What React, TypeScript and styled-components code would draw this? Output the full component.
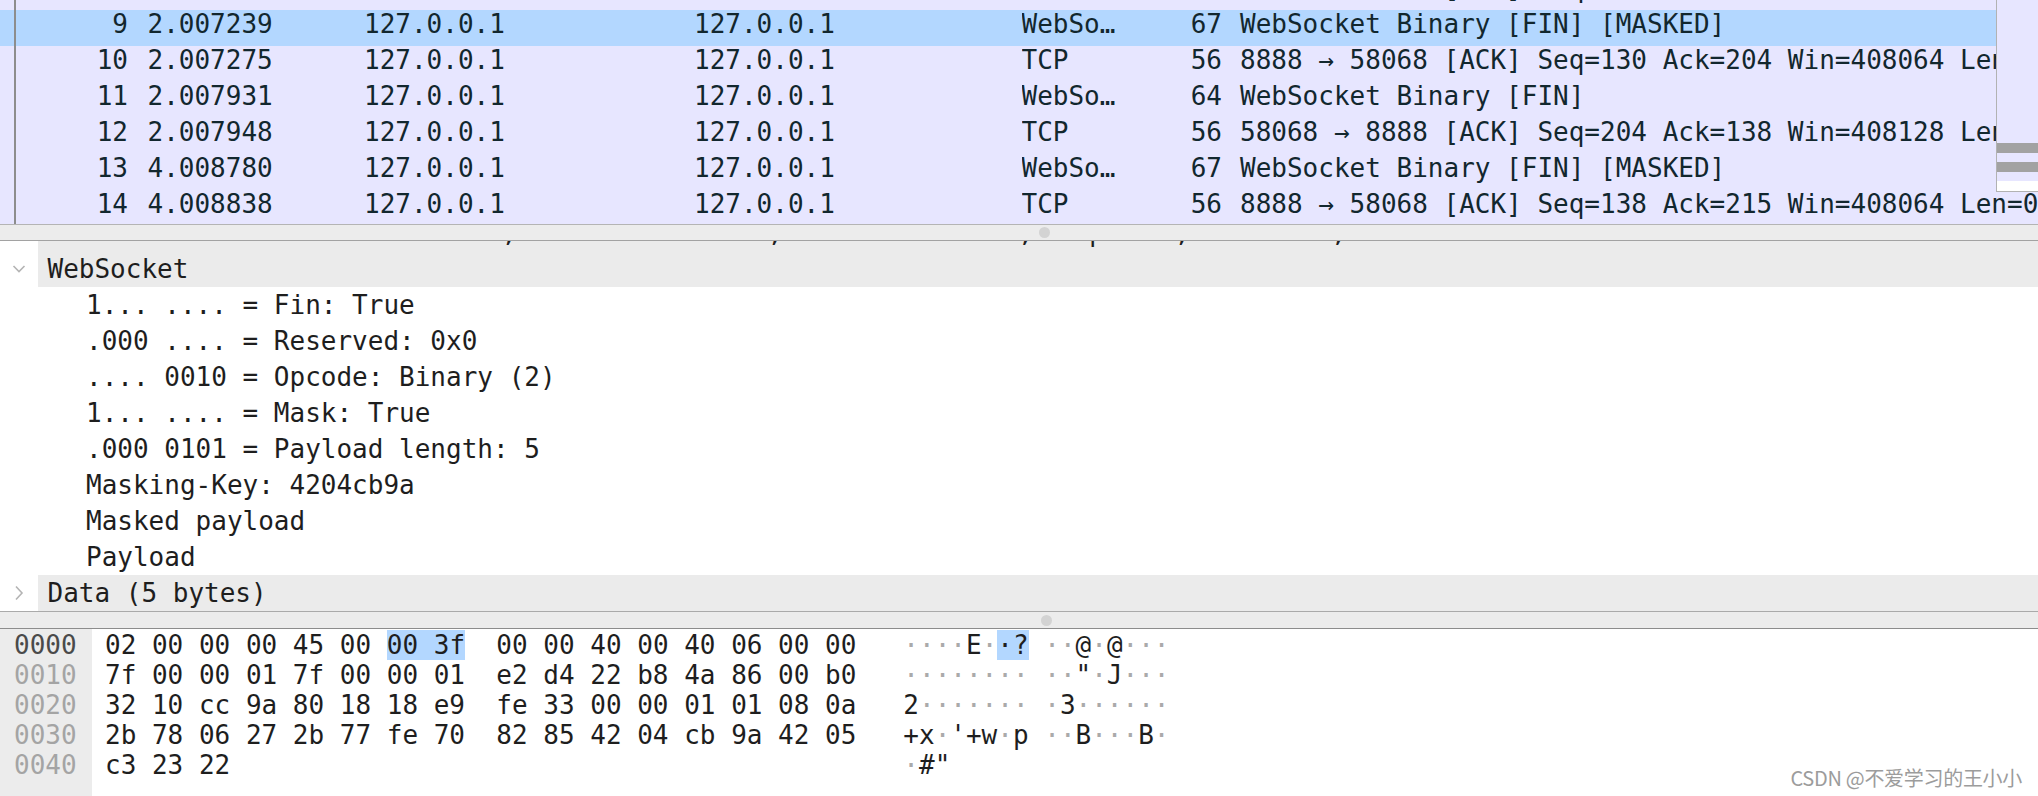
import React from "react";
import styled, { createGlobalStyle } from "styled-components";

const GlobalStyle = createGlobalStyle`
  *, *::before, *::after { box-sizing: border-box; }
  html, body { margin: 0; padding: 0; background: #ffffff; }
  body { width: 2038px; height: 796px; overflow: hidden; }
  #root { width: 2038px; height: 796px; }
`;

const MONO = `"DejaVu Sans Mono", "Liberation Mono", monospace`;

const Window = styled.div`
  position: relative;
  width: 2038px;
  height: 796px;
  display: flex;
  flex-direction: column;
  background: #ffffff;
  font-family: ${MONO};
  font-size: 26px;
  overflow: hidden;
`;

/* ---------- packet list ---------- */

const PacketList = styled.div`
  position: relative;
  flex: none;
  height: 225px;
  overflow: hidden;
  background: #e7e6ff;
  border-bottom: 1px solid #b4b4b4;
`;

const PacketRows = styled.div`
  margin-top: -26px;
`;

const PacketRow = styled.div<{ $selected?: boolean }>`
  display: grid;
  grid-template-columns: 16px 131.5px 216.5px 330px 327.5px 138.5px 62px minmax(0, 1fr);
  height: 36px;
  line-height: 29px;
  white-space: pre;
  color: #12272e;
  background: ${(p) => (p.$selected ? "#b3d7ff" : "transparent")};
`;

const Gutter = styled.span`
  border-right: 2px solid #8d8d8d;
`;

const Cell = styled.span<{ $right?: boolean; $padL?: number; $padR?: number }>`
  overflow: hidden;
  text-align: ${(p) => (p.$right ? "right" : "left")};
  padding-left: ${(p) => p.$padL ?? 0}px;
  padding-right: ${(p) => p.$padR ?? 0}px;
`;

const OverviewBar = styled.div`
  position: absolute;
  top: 0;
  right: 0;
  width: 42px;
  height: 192px;
  background: #e7e6ff;
  border-left: 1px solid #b2b2b2;
  border-bottom: 1px solid #b2b2b2;
  display: flex;
  flex-direction: column;
  justify-content: flex-end;
  gap: 9px;
`;

const OverviewMark = styled.div<{ $white?: boolean }>`
  height: 10px;
  background: ${(p) => (p.$white ? "#ffffff" : "#a2a2a2")};
`;

/* ---------- splitters ---------- */

const Splitter = styled.div<{ $h: number; $line: string; $handleX: number }>`
  flex: none;
  height: ${(p) => p.$h}px;
  background: #ececec;
  border-bottom: 1px solid ${(p) => p.$line};
  display: flex;
  align-items: center;
  padding-left: ${(p) => p.$handleX}px;
`;

const Handle = styled.div`
  width: 11px;
  height: 11px;
  border-radius: 50%;
  background: #d3d3d3;
`;

/* ---------- details tree ---------- */

const TreePanel = styled.div`
  flex: none;
  height: 371px;
  overflow: hidden;
  background: #ffffff;
  border-bottom: 1px solid #aaaaaa;
`;

const TreeRows = styled.div`
  margin-top: -26px;
`;

const TreeRow = styled.div<{ $clipped?: boolean }>`
  display: grid;
  grid-template-columns: 38px minmax(0, 1fr);
  height: 36px;
  line-height: ${(p) => (p.$clipped ? 35 : 36)}px;
  white-space: pre;
  color: #1e1e1e;
`;

const Twisty = styled.span`
  display: flex;
  align-items: center;
  justify-content: center;
  background: #ffffff;
`;

const TreeLabel = styled.span<{ $top?: boolean }>`
  overflow: hidden;
  background: ${(p) => (p.$top ? "#ebebeb" : "#ffffff")};
  padding-left: ${(p) => (p.$top ? 9.5 : 48)}px;
`;

/* ---------- hex dump ---------- */

const HexPanel = styled.div`
  flex: 1;
  display: grid;
  grid-template-columns: 92px minmax(0, 1fr);
  background: #ffffff;
`;

const OffsetCol = styled.div`
  background: #ececec;
  padding: 1px 0 0 14px;
`;

const Offset = styled.div<{ $active?: boolean }>`
  height: 30px;
  line-height: 30px;
  color: ${(p) => (p.$active ? "#4a4a4a" : "#a4a4a4")};
`;

const BytesCol = styled.div`
  padding: 1px 0 0 13px;
`;

const HexLine = styled.div`
  height: 30px;
  line-height: 30px;
  white-space: pre;
  color: #1e1e1e;
`;

const Mark = styled.span`
  display: inline-block;
  height: 30px;
  background: #b3d7ff;
`;

const Dot = styled.span`
  color: #aaaaaa;
`;

const Watermark = styled.div`
  position: absolute;
  right: 16px;
  bottom: 7px;
  font-family: "Noto Sans CJK SC", "Noto Sans", sans-serif;
  font-size: 20px;
  line-height: 22px;
  color: #9c9c9c;
  letter-spacing: -0.3px;
`;

/* ---------- icons ---------- */

const ChevronDown = () => (
  <svg width="14" height="10" viewBox="0 0 14 10">
    <polyline points="1.5,2 7,7.5 12.5,2" fill="none" stroke="#b4b4b4" strokeWidth="1.6" />
  </svg>
);

const ChevronRight = () => (
  <svg width="10" height="16" viewBox="0 0 10 16">
    <polyline points="2,1.5 8,8 2,14.5" fill="none" stroke="#b4b4b4" strokeWidth="1.6" />
  </svg>
);

/* ---------- data ---------- */

type Packet = {
  no: string;
  time: string;
  proto: string;
  len: string;
  info: string;
  selected?: boolean;
};

const PACKETS: Packet[] = [
  { no: "8", time: "2.007190", proto: "TCP", len: "56", info: "58068 → 8888 [ACK] Seq=193 Ack=130 Win=408128 Len=0" },
  { no: "9", time: "2.007239", proto: "WebSo…", len: "67", info: "WebSocket Binary [FIN] [MASKED]", selected: true },
  { no: "10", time: "2.007275", proto: "TCP", len: "56", info: "8888 → 58068 [ACK] Seq=130 Ack=204 Win=408064 Len=0" },
  { no: "11", time: "2.007931", proto: "WebSo…", len: "64", info: "WebSocket Binary [FIN]" },
  { no: "12", time: "2.007948", proto: "TCP", len: "56", info: "58068 → 8888 [ACK] Seq=204 Ack=138 Win=408128 Len=0" },
  { no: "13", time: "4.008780", proto: "WebSo…", len: "67", info: "WebSocket Binary [FIN] [MASKED]" },
  { no: "14", time: "4.008838", proto: "TCP", len: "56", info: "8888 → 58068 [ACK] Seq=138 Ack=215 Win=408064 Len=0" },
];

type TreeItem = { text: string; top?: boolean; open?: boolean; clipped?: boolean };

const TREE: TreeItem[] = [
  {
    text: "Transmission Control Protocol, Src Port: 58068, Dst Port: 8888, Seq: 193, Ack: 130, Len: 11",
    top: true,
    open: false,
    clipped: true,
  },
  { text: "WebSocket", top: true, open: true },
  { text: "1... .... = Fin: True" },
  { text: ".000 .... = Reserved: 0x0" },
  { text: ".... 0010 = Opcode: Binary (2)" },
  { text: "1... .... = Mask: True" },
  { text: ".000 0101 = Payload length: 5" },
  { text: "Masking-Key: 4204cb9a" },
  { text: "Masked payload" },
  { text: "Payload" },
  { text: "Data (5 bytes)", top: true, open: false },
];

type HexRow = {
  off: string;
  hex: string;
  ascii: string;
  hexHl?: [number, number];
  asciiHl?: [number, number];
};

const HEX: HexRow[] = [
  { off: "0000", hex: "02 00 00 00 45 00 00 3f  00 00 40 00 40 06 00 00", ascii: "····E··? ··@·@···", hexHl: [18, 23], asciiHl: [6, 8] },
  { off: "0010", hex: "7f 00 00 01 7f 00 00 01  e2 d4 22 b8 4a 86 00 b0", ascii: "········ ··\"·J···" },
  { off: "0020", hex: "32 10 cc 9a 80 18 18 e9  fe 33 00 00 01 01 08 0a", ascii: "2······· ·3······" },
  { off: "0030", hex: "2b 78 06 27 2b 77 fe 70  82 85 42 04 cb 9a 42 05", ascii: "+x·'+w·p ··B···B·" },
  { off: "0040", hex: "c3 23 22", ascii: "·#\"" },
];

const renderAsciiPlain = (s: string, keyBase: string) =>
  Array.from(s).map((ch, i) =>
    ch === "·" ? <Dot key={`${keyBase}-${i}`}>·</Dot> : <React.Fragment key={`${keyBase}-${i}`}>{ch}</React.Fragment>
  );

const HexLineView: React.FC<{ row: HexRow }> = ({ row }) => {
  const hex = row.hexHl ? (
    <>
      {row.hex.slice(0, row.hexHl[0])}
      <Mark>{row.hex.slice(row.hexHl[0], row.hexHl[1])}</Mark>
      {row.hex.slice(row.hexHl[1])}
    </>
  ) : (
    row.hex
  );
  const chars = Array.from(row.ascii);
  const ascii = row.asciiHl ? (
    <>
      {renderAsciiPlain(chars.slice(0, row.asciiHl[0]).join(""), "a")}
      <Mark>{chars.slice(row.asciiHl[0], row.asciiHl[1]).join("")}</Mark>
      {renderAsciiPlain(chars.slice(row.asciiHl[1]).join(""), "b")}
    </>
  ) : (
    renderAsciiPlain(row.ascii, "c")
  );
  const pad = " ".repeat(48 - row.hex.length + 3);
  return (
    <HexLine>
      {hex}
      {pad}
      {ascii}
    </HexLine>
  );
};

export default function App() {
  return (
    <>
      <GlobalStyle />
      <Window>
        <PacketList>
          <PacketRows>
            {PACKETS.map((p) => (
              <PacketRow key={p.no} $selected={p.selected}>
                <Gutter />
                <Cell $right $padR={19.5}>{p.no}</Cell>
                <Cell>{p.time}</Cell>
                <Cell>127.0.0.1</Cell>
                <Cell>127.0.0.1</Cell>
                <Cell>{p.proto}</Cell>
                <Cell $right>{p.len}</Cell>
                <Cell $padL={18}>{p.info}</Cell>
              </PacketRow>
            ))}
          </PacketRows>
          <OverviewBar>
            <OverviewMark />
            <OverviewMark />
            <OverviewMark $white />
          </OverviewBar>
        </PacketList>

        <Splitter $h={16} $line="#a2a2a2" $handleX={1039}>
          <Handle />
        </Splitter>

        <TreePanel>
          <TreeRows>
            {TREE.map((t, i) => (
              <TreeRow key={i} $clipped={t.clipped}>
                <Twisty>{t.top ? t.open ? <ChevronDown /> : <ChevronRight /> : null}</Twisty>
                <TreeLabel $top={t.top}>{t.text}</TreeLabel>
              </TreeRow>
            ))}
          </TreeRows>
        </TreePanel>

        <Splitter $h={17} $line="#8c8c8c" $handleX={1041}>
          <Handle />
        </Splitter>

        <HexPanel>
          <OffsetCol>
            {HEX.map((r, i) => (
              <Offset key={r.off} $active={i === 0}>
                {r.off}
              </Offset>
            ))}
          </OffsetCol>
          <BytesCol>
            {HEX.map((r) => (
              <HexLineView key={r.off} row={r} />
            ))}
          </BytesCol>
        </HexPanel>

        <Watermark>CSDN @不爱学习的王小小</Watermark>
      </Window>
    </>
  );
}
